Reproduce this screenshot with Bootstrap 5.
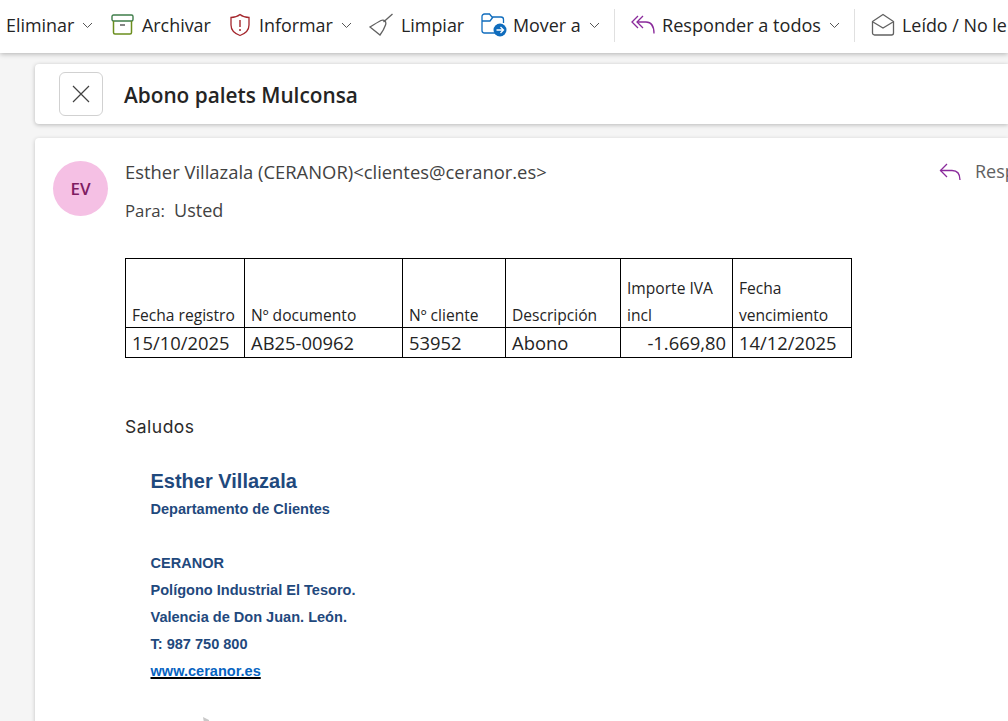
<!DOCTYPE html>
<html lang="es">
<head>
<meta charset="utf-8">
<title>Abono palets Mulconsa</title>
<link href="https://cdn.jsdelivr.net/npm/bootstrap@5.3.0/dist/css/bootstrap.min.css" rel="stylesheet">
<style>
html,body{height:721px;overflow:hidden}
body{background:#f5f5f5;font-family:"Open Sans","Noto Sans",sans-serif;color:#242424}
.ribbon{height:53px;background:#fff;box-shadow:0 1px 5px rgba(0,0,0,.28);padding:0 0 2px 6px;white-space:nowrap;font-size:17.9px;position:relative;z-index:2;overflow:hidden}
.tool{display:flex;align-items:center;flex:none}
.tool svg{flex:none}
.chev{margin-left:8px}
.vsep{width:1px;height:33px;background:#e0e0e0;flex:none}
.w-eli{width:105px}.w-arc{width:118px}.w-inf{width:140px}.w-lim{width:112px}.w-mov{width:133px}
.w-res{width:239px;padding-left:16px;font-size:18.1px}.w-res .ic-8{margin-right:7px}.w-lei{padding-left:16px}.w-lei .ic-8{margin-right:7px}
.ic-8{margin-right:8px}.ic-6{margin-right:6px}
.stage{padding:11px 0 0 35px}
.subject{height:60px;background:#fff;border-radius:4px 0 0 4px;box-shadow:0 1px 4px rgba(0,0,0,.25);padding-left:24px;gap:21px}
.closer{width:44px;height:44px;background:#fff;border:1px solid #d1d1d1;border-radius:6px;padding:0}
.subj-text{font-size:20.8px;font-weight:600;color:#242424;margin:2px 0 0}
.mail{margin-top:14px;height:600px;background:#fff;border-radius:4px 0 0 0;box-shadow:0 1px 4px rgba(0,0,0,.2);position:relative}
.avatar{position:absolute;left:18px;top:23px;width:55px;height:55px;border-radius:50%;background:#f5c0e4;color:#7f1c62;font-size:17px;font-weight:600}
.mailbody{padding:22px 0 0 90px}
.sender{font-size:18.4px;color:#424242;line-height:24px;white-space:nowrap}
.recip{margin-top:14px;font-size:18px;line-height:24px;color:#424242}
.recip small{font-size:16.8px;margin-right:9px}
.respond{position:absolute;top:20px;left:904px;font-size:18px;color:#616161;white-space:nowrap;gap:13px}
.grid-mail{margin-top:35px;border-collapse:collapse;color:#242424;table-layout:fixed;width:726px}
.grid-mail td{border:1px solid #000;padding:0 6px;vertical-align:bottom;font-size:15.6px;line-height:27px}
.grid-mail .hdrrow td{height:69px}
.grid-mail .hdrrow td>span{display:block;transform:translateY(2px)}
.grid-mail .datarow td{height:30px;font-size:18.4px;vertical-align:middle}
.greet{margin-top:57px;font-family:Inter,"Liberation Sans",sans-serif;font-size:17.5px;letter-spacing:.5px;line-height:24px;color:#2b2b2b}
.sign{margin:27px 0 0 25.500px;font-family:"Liberation Sans",sans-serif;font-weight:700;color:#1f497d;font-size:14.55px;line-height:27px}
.sign-name{font-size:20px;line-height:30px}
.gap-line{height:27px}
.sign a{color:#0563c1;text-decoration:underline;text-decoration-color:#000;text-decoration-thickness:2px}
.tail{display:block;margin:32px 0 0 78px}
</style>
</head>
<body>
<div class="ribbon d-flex align-items-center">
  <div class="tool w-eli">Eliminar<svg class="chev" width="11" height="7" viewBox="0 0 11 7"><path d="M1 1l4.500 4.500L10 1" fill="none" stroke="#555" stroke-width="1"/></svg></div>
  <div class="tool w-arc"><svg class="ic-8" width="23" height="22" viewBox="0 0 23 22"><rect x="1" y="1" width="21" height="6" rx="1.500" fill="none" stroke="#3f7d4a" stroke-width="1.400"/><path d="M2.500 7v11.500a1.500 1.500 0 0 0 1.500 1.500h15a1.500 1.500 0 0 0 1.500-1.500V7" fill="none" stroke="#6b8e1e" stroke-width="1.500"/><path d="M9 11h5" stroke="#444" stroke-width="1.300"/></svg>Archivar</div>
  <div class="tool w-inf"><svg class="ic-8" width="22" height="24" viewBox="0 0 22 24"><path d="M11 1.500c2.500 2 5.500 3 9 3V12c0 5-3.500 8.500-9 10.500C5.500 20.500 2 17 2 12V4.500c3.500 0 6.500-1 9-3z" fill="none" stroke="#a4262c" stroke-width="1.300"/><path d="M11 7v7" stroke="#a4262c" stroke-width="1.400"/><circle cx="11" cy="17" r="1" fill="#a4262c"/></svg>Informar<svg class="chev" width="11" height="7" viewBox="0 0 11 7"><path d="M1 1l4.500 4.500L10 1" fill="none" stroke="#555"/></svg></div>
  <div class="tool w-lim"><svg class="ic-8" width="24" height="24" viewBox="0 0 24 24"><path d="M23.500 1L14.500 9" stroke="#616161" stroke-width="1.400"/><path d="M12 7.500c1.500-.5 3-.5 4 .5s1 2.500.5 4c-1 3-2.500 6-5.500 10L1 14c4-2.500 8-5 11-6.500z" fill="none" stroke="#616161" stroke-width="1.300"/></svg>Limpiar</div>
  <div class="tool w-mov"><svg class="ic-6" width="26" height="24" viewBox="0 0 26 24"><path d="M14 20H3.500A2.500 2.500 0 0 1 1 17.500V3.500A2.500 2.500 0 0 1 3.500 1h5L11 4h9a2.500 2.500 0 0 1 2.500 2.500V10M1 8h8l3-4" fill="none" stroke="#0f6cbd" stroke-width="1.300"/><circle cx="19" cy="17" r="6.500" fill="#0f6cbd"/><path d="M15.500 17h6.500M19.500 14l3 3-3 3" fill="none" stroke="#fff" stroke-width="1.300"/></svg>Mover a<svg class="chev" width="11" height="7" viewBox="0 0 11 7"><path d="M1 1l4.500 4.500L10 1" fill="none" stroke="#555"/></svg></div>
  <div class="vsep"></div>
  <div class="tool w-res"><svg class="ic-8" width="24" height="20" viewBox="0 0 24 20"><path d="M7 1L1 7l6 6M12 1L6 7l6 6" fill="none" stroke="#8a2a9b" stroke-width="1.300"/><path d="M6 7h9c5 0 8 3.500 8 11.500" fill="none" stroke="#8a2a9b" stroke-width="1.300"/></svg>Responder a todos<svg class="chev" width="11" height="7" viewBox="0 0 11 7"><path d="M1 1l4.500 4.500L10 1" fill="none" stroke="#555"/></svg></div>
  <div class="vsep"></div>
  <div class="tool w-lei"><svg class="ic-8" width="24" height="24" viewBox="0 0 24 24"><path d="M1.500 8.500L12 1.500l10.500 7V20a2 2 0 0 1-2 2h-17a2 2 0 0 1-2-2z" fill="none" stroke="#616161" stroke-width="1.300"/><path d="M2 9l10 6 10-6" fill="none" stroke="#616161" stroke-width="1.300"/></svg>Leído / No leído</div>
</div>
<div class="stage">
  <div class="subject d-flex align-items-center">
    <button class="closer btn d-flex align-items-center justify-content-center" aria-label="Cerrar"><svg width="18" height="18" viewBox="0 0 18 18"><path d="M1 1l16 16M17 1L1 17" stroke="#424242" stroke-width="1.200"/></svg></button>
    <h1 class="subj-text">Abono palets Mulconsa</h1>
  </div>
  <div class="mail">
    <div class="avatar d-flex align-items-center justify-content-center">EV</div>
    <div class="respond d-flex align-items-center"><svg width="23" height="18" viewBox="0 0 23 18"><path d="M8 1L1.500 7.500 8 14" fill="none" stroke="#8a2a9b" stroke-width="1.300"/><path d="M1.500 7.500H13c5 0 8 3.500 8 9.500" fill="none" stroke="#8a2a9b" stroke-width="1.300"/></svg>Responder</div>
    <div class="mailbody">
      <div class="sender">Esther Villazala (CERANOR)&lt;clientes@ceranor.es&gt;</div>
      <div class="recip"><small>Para:</small>Usted</div>
      <table class="grid-mail">
        <colgroup><col style="width:119px"><col style="width:158px"><col style="width:103px"><col style="width:115px"><col style="width:112px"><col style="width:119px"></colgroup>
        <tr class="hdrrow"><td><span>Fecha registro</span></td><td><span>Nº documento</span></td><td><span>Nº cliente</span></td><td><span>Descripción</span></td><td><span>Importe IVA incl</span></td><td><span>Fecha vencimiento</span></td></tr>
        <tr class="datarow"><td>15/10/2025</td><td>AB25-00962</td><td>53952</td><td>Abono</td><td class="text-end">-1.669,80</td><td>14/12/2025</td></tr>
      </table>
      <div class="greet">Saludos</div>
      <div class="sign">
        <div class="sign-name">Esther Villazala</div>
        <div>Departamento de Clientes</div>
        <div class="gap-line"></div>
        <div>CERANOR</div>
        <div>Polígono Industrial El Tesoro.</div>
        <div>Valencia de Don Juan. León.</div>
        <div>T: 987 750 800</div>
        <div><a href="#">www.ceranor.es</a></div>
      </div>
      <svg class="tail" width="6" height="6" viewBox="0 0 6 6"><path d="M0 0l6 3v3H1z" fill="#c8c8c8"/></svg>
    </div>
  </div>
</div>
<script src="https://cdn.jsdelivr.net/npm/bootstrap@5.3.0/dist/js/bootstrap.bundle.min.js"></script>
</body>
</html>
